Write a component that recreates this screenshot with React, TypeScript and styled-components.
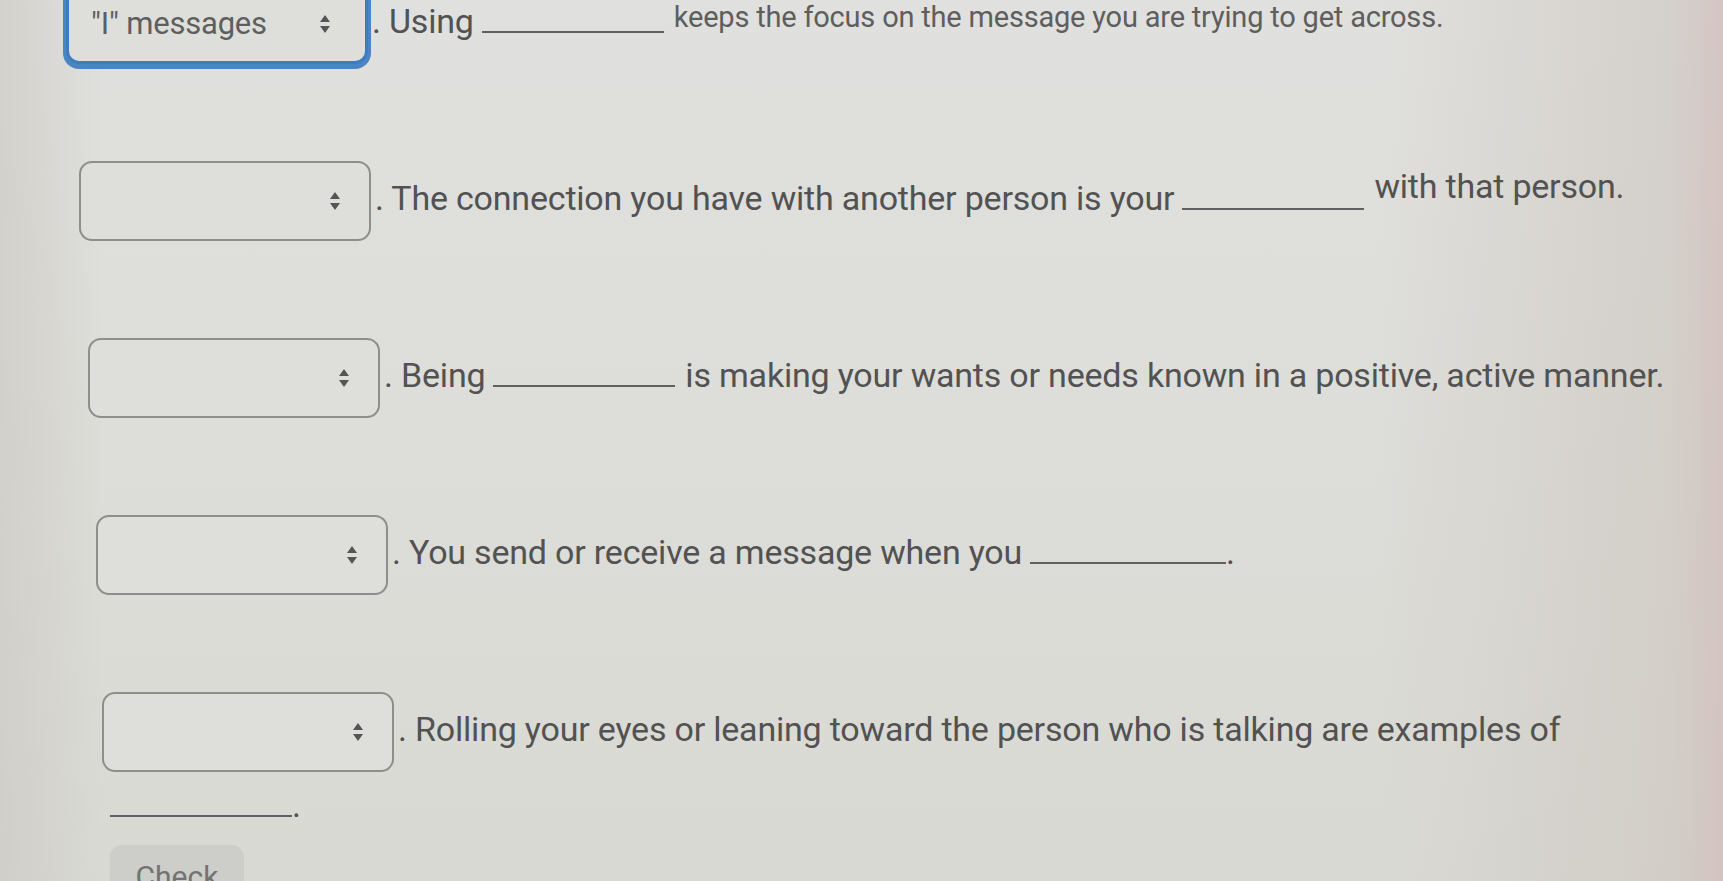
import React from "react";
import styled, { createGlobalStyle, css } from "styled-components";

const Global = createGlobalStyle`
  html, body { margin: 0; padding: 0; }
  body {
    width: 1723px;
    height: 881px;
    overflow: hidden;
    font-family: Roboto, "Liberation Sans", sans-serif;
  }
`;

const Page = styled.div`
  width: 1723px;
  height: 881px;
  overflow: hidden;
  box-sizing: border-box;
  background:
    linear-gradient(90deg, rgba(200,198,190,0.55) 0%, rgba(220,220,216,0) 6%, rgba(226,226,224,0) 50%, rgba(214,212,204,0) 80%, rgba(205,198,190,0.6) 97%, rgba(210,190,188,0.8) 100%),
    linear-gradient(180deg, #e0e0de 0%, #dcdcd8 60%, #d9d9d4 100%);
  padding: 0 24px 0 0;
`;

const Quiz = styled.div`
  margin-top: -26px;
  display: flex;
  flex-direction: column;
  gap: 77px;
`;

const Item = styled.p<{ $indent: number }>`
  margin: 0;
  padding-left: ${(p) => p.$indent}px;
  font-size: 34px;
  line-height: 46px;
  color: #525252;
  letter-spacing: -0.2px;
`;

const Select = styled.span<{ $focused?: boolean }>`
  display: inline-flex;
  align-items: center;
  justify-content: space-between;
  box-sizing: border-box;
  width: 292px;
  height: 80px;
  margin: 10px 4px 10px 0;
  padding: 0 28px 0 20px;
  vertical-align: middle;
  border: 2px solid #8e8e8a;
  border-radius: 13px;
  background: #dededb;
  font-size: 31px;
  color: #5e5e5e;
  ${(p) =>
    p.$focused &&
    css`
      width: 302px;
      padding: 0 34px 0 22px;
      border: 3px solid #3f7cbf;
      box-shadow: 0 2px 0 3px #4a84c2;
    `}
`;

const Value = styled.span`
  white-space: nowrap;
`;

const Spinner = () => (
  <svg width="12" height="20" viewBox="0 0 12 20" aria-hidden="true">
    <path d="M6 1 L11 8 L1 8 Z" fill="#555555" />
    <path d="M6 19 L11 12 L1 12 Z" fill="#555555" />
  </svg>
);

const Blank = styled.span<{ $w?: number; $tight?: boolean }>`
  display: inline-block;
  width: ${(p) => p.$w ?? 182}px;
  height: 28px;
  margin: 0 ${(p) => (p.$tight ? 0 : 10)}px 0 8px;
  border-bottom: 2px solid #606060;
  vertical-align: baseline;
`;

const Raised = styled.span`
  vertical-align: 12px;
`;

const Small = styled.span`
  font-size: 29px;
  vertical-align: 6px;
  color: #5e5e5e;
`;

const CheckButton = styled.button`
  align-self: flex-start;
  margin: -60px 0 0 110px;
  width: 134px;
  height: 70px;
  padding: 14px 0 0;
  border: none;
  border-radius: 12px;
  background: #cdcdc9;
  color: #727272;
  font-family: Roboto, "Liberation Sans", sans-serif;
  font-size: 30px;
  display: flex;
  align-items: flex-start;
  justify-content: center;
`;

export default function App() {
  return (
    <Page>
      <Global />
      <Quiz>
        <Item $indent={66}>
          <Select $focused>
            <Value>"I" messages</Value>
            <Spinner />
          </Select>
          . Using<Blank />
          <Small>keeps the focus on the message you are trying to get across.</Small>
        </Item>
        <Item $indent={79}>
          <Select>
            <Value />
            <Spinner />
          </Select>
          . The connection you have with another person is your<Blank />
          <Raised>with that person.</Raised>
        </Item>
        <Item $indent={88}>
          <Select>
            <Value />
            <Spinner />
          </Select>
          . Being<Blank />is making your wants or needs known in a positive, active manner.
        </Item>
        <Item $indent={96}>
          <Select>
            <Value />
            <Spinner />
          </Select>
          . You send or receive a message when you<Blank $w={196} $tight />.
        </Item>
        <Item $indent={102}>
          <Select>
            <Value />
            <Spinner />
          </Select>
          . Rolling your eyes or leaning toward the person who is talking are examples of{" "}
          <Blank $w={182} $tight />.
        </Item>
        <CheckButton>Check</CheckButton>
      </Quiz>
    </Page>
  );
}
